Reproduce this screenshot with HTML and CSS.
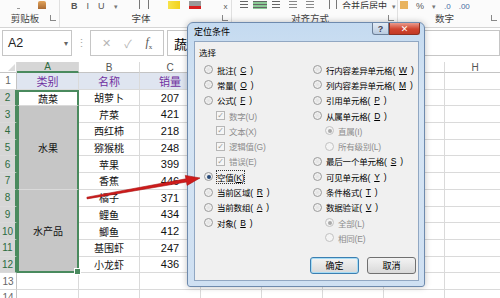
FILE: index.html
```html
<!DOCTYPE html>
<html lang="zh-CN">
<head>
  <meta charset="UTF-8">
  <title>定位条件</title>
  <link rel="stylesheet" href="styles.css">
</head>
<body>
  <div class="ribbon">
    <div class="group g-clip">
      <div class="tools">
        <span class="ico dot"></span>
        <span class="ico brush"></span>
      </div>
      <div class="group-label"><span class="label">剪贴板</span><span class="launcher"></span></div>
    </div>
    <div class="group g-font">
      <div class="tools">
        <span class="glyph b">B</span><span class="glyph">I</span><span class="glyph">U</span><span class="glyph dd">▾</span>
        <span class="ico border-ico"></span>
        <span class="ico hl"></span>
        <span class="ico fc"></span>
        <span class="glyph small">x</span>
      </div>
      <div class="group-label"><span class="label">字体</span><span class="launcher"></span></div>
    </div>
    <div class="group g-align">
      <div class="tools">
        <span class="ico lines"></span>
        <span class="ico lines on"></span>
        <span class="ico lines"></span>
        <span class="ico indent"></span>
        <span class="ico indent"></span>
        <span class="ico merge"></span>
        <span class="merge-text">合并后居中</span>
        <span class="glyph dd">▾</span>
      </div>
      <div class="group-label"><span class="label">对齐方式</span><span class="launcher"></span></div>
    </div>
    <div class="group g-num">
      <div class="tools">
        <span class="ico money"></span>
        <span class="glyph">%</span><span class="glyph dd">▾</span>
        <span class="glyph dec">.0</span><span class="glyph dec">.00</span>
      </div>
      <div class="group-label"><span class="label">数字</span><span class="launcher"></span></div>
    </div>
  </div>

  <div class="formula-bar">
    <div class="name-box">A2<span class="nb-arrow">▾</span></div>
    <div class="grip">⋮</div>
    <div class="fx-box"><span class="fx-btn">✕</span><span class="fx-btn">✓</span><span class="fx-btn fx"><i>f</i><sub>x</sub></span></div>
    <div class="formula-input">蔬菜</div>
  </div>

  <div class="sheet">
    <div class="ch corner"><span class="tri"></span></div><div class="ch sel">A</div><div class="ch">B</div><div class="ch">C</div><div class="ch">D</div><div class="ch">E</div><div class="ch">F</div><div class="ch">G</div><div class="ch">H</div>

    <div class="rh">1</div><div class="c head">类别</div><div class="c head">名称</div><div class="c head">销量</div><div class="c"></div><div class="c"></div><div class="c"></div><div class="c"></div><div class="c"></div>
    <div class="rh sel">2</div><div class="c a2">蔬菜</div><div class="c">胡萝卜</div><div class="c num">207</div><div class="c"></div><div class="c"></div><div class="c"></div><div class="c"></div><div class="c"></div>
    <div class="rh sel">3</div><div class="c merged">水果</div><div class="c">芹菜</div><div class="c num">421</div><div class="c"></div><div class="c"></div><div class="c"></div><div class="c"></div><div class="c"></div>
    <div class="rh sel">4</div><div class="c">西红柿</div><div class="c num">218</div><div class="c"></div><div class="c"></div><div class="c"></div><div class="c"></div><div class="c"></div>
    <div class="rh sel">5</div><div class="c">猕猴桃</div><div class="c num">248</div><div class="c"></div><div class="c"></div><div class="c"></div><div class="c"></div><div class="c"></div>
    <div class="rh sel">6</div><div class="c">苹果</div><div class="c num">399</div><div class="c"></div><div class="c"></div><div class="c"></div><div class="c"></div><div class="c"></div>
    <div class="rh sel">7</div><div class="c">香蕉</div><div class="c num">446</div><div class="c"></div><div class="c"></div><div class="c"></div><div class="c"></div><div class="c"></div>
    <div class="rh sel">8</div><div class="c merged last">水产品</div><div class="c">橘子</div><div class="c num">371</div><div class="c"></div><div class="c"></div><div class="c"></div><div class="c"></div><div class="c"></div>
    <div class="rh sel">9</div><div class="c">鲤鱼</div><div class="c num">434</div><div class="c"></div><div class="c"></div><div class="c"></div><div class="c"></div><div class="c"></div>
    <div class="rh sel">10</div><div class="c">鲫鱼</div><div class="c num">412</div><div class="c"></div><div class="c"></div><div class="c"></div><div class="c"></div><div class="c"></div>
    <div class="rh sel">11</div><div class="c">基围虾</div><div class="c num">247</div><div class="c"></div><div class="c"></div><div class="c"></div><div class="c"></div><div class="c"></div>
    <div class="rh sel">12</div><div class="c">小龙虾</div><div class="c num">436</div><div class="c"></div><div class="c"></div><div class="c"></div><div class="c"></div><div class="c"></div>
    <div class="rh">13</div><div class="c"></div><div class="c"></div><div class="c"></div><div class="c"></div><div class="c"></div><div class="c"></div><div class="c"></div><div class="c"></div>
    <div class="rh">14</div><div class="c"></div><div class="c"></div><div class="c"></div><div class="c"></div><div class="c"></div><div class="c"></div><div class="c"></div><div class="c"></div>
  </div>

  <!-- 定位条件 dialog window -->
  <div class="dialog">
    <div class="title-bar">
      <span class="title">定位条件</span>
      <span class="help-btn">?</span>
      <span class="close-btn">✕</span>
    </div>
    <div class="client">
      <div class="caption">选择</div>
      <div class="options">
        <div class="col">
          <div class="opt"><span class="radio"></span>批注(<u>C</u>)</div>
          <div class="opt"><span class="radio"></span>常量(<u>O</u>)</div>
          <div class="opt"><span class="radio"></span>公式(<u>F</u>)</div>
          <div class="opt sub off"><span class="check">✓</span>数字(U)</div>
          <div class="opt sub off"><span class="check">✓</span>文本(X)</div>
          <div class="opt sub off"><span class="check">✓</span>逻辑值(G)</div>
          <div class="opt sub off"><span class="check">✓</span>错误(E)</div>
          <div class="opt"><span class="radio on"></span><span class="focus">空值(<u>K</u>)</span></div>
          <div class="opt"><span class="radio"></span>当前区域(<u>R</u>)</div>
          <div class="opt"><span class="radio"></span>当前数组(<u>A</u>)</div>
          <div class="opt"><span class="radio"></span>对象(<u>B</u>)</div>
        </div>
        <div class="col">
          <div class="opt"><span class="radio"></span>行内容差异单元格(<u>W</u>)</div>
          <div class="opt"><span class="radio"></span>列内容差异单元格(<u>M</u>)</div>
          <div class="opt"><span class="radio"></span>引用单元格(<u>P</u>)</div>
          <div class="opt"><span class="radio"></span>从属单元格(<u>D</u>)</div>
          <div class="opt sub off"><span class="radio on"></span>直属(I)</div>
          <div class="opt sub off"><span class="radio"></span>所有级别(L)</div>
          <div class="opt"><span class="radio"></span>最后一个单元格(<u>S</u>)</div>
          <div class="opt"><span class="radio"></span>可见单元格(<u>Y</u>)</div>
          <div class="opt"><span class="radio"></span>条件格式(<u>T</u>)</div>
          <div class="opt"><span class="radio"></span>数据验证(<u>V</u>)</div>
          <div class="opt sub off"><span class="radio on"></span>全部(L)</div>
          <div class="opt sub off"><span class="radio"></span>相同(E)</div>
        </div>
      </div>
      <div class="buttons">
        <button class="btn default">确定</button>
        <button class="btn">取消</button>
      </div>
    </div>
  </div>

  <svg class="arrow" width="500" height="298" viewBox="0 0 500 298">
    <polygon points="86.9,197.2 185.9,178.8 185.3,175.4 200,178 187.1,185.4 186.5,182 87.1,198.9" fill="#cf1b1b" stroke="#a81212" stroke-width="0.6"/>
  </svg>
</body>
</html>
```

FILE: styles.css
```css
body {
  margin: 0;
  width: 500px;
  height: 298px;
  overflow: hidden;
  position: relative;
  background: #fff;
  font-family: "Liberation Sans", "Noto Sans CJK SC", sans-serif;
  color: #000;
}

/* ribbon */
.ribbon {
  display: flex;
  height: 27px;
  border-bottom: 1px solid #d5d5d5;
  background: #fbfbfb;
}
.group {
  display: flex;
  flex-direction: column;
  box-sizing: border-box;
  border-right: 1px solid #e0e0e0;
}
.g-clip { width: 60px; }
.g-font { width: 172px; }
.g-align { width: 166px; }
.g-num { flex: 1; border-right: none; }
.tools {
  height: 9px;
  overflow: hidden;
  display: flex;
  align-items: flex-end;
  gap: 6px;
}
.tools > * { margin-bottom: -2px; }
.group-label {
  flex: 1;
  display: flex;
  align-items: center;
  font-size: 9.5px;
  color: #444;
  padding: 0 3px 0 0;
}
.group-label .label {
  flex: 1;
  text-align: center;
}
.launcher {
  width: 5px;
  height: 5px;
  border-left: 1px solid #888;
  border-bottom: 1px solid #888;
}
.ico { display: inline-block; width: 8px; height: 10px; }
.glyph { font-size: 9px; color: #555; line-height: 9px; }
.glyph.b { font-weight: bold; }
.glyph.dd { font-size: 7px; color: #777; }
.glyph.small { font-size: 8px; margin-left: 14px; }
.glyph.dec { font-size: 8px; color: #4a6fa5; }
.g-clip .tools { padding-left: 17px; gap: 18px; }
.dot { width: 3px; height: 3px; background: #999; }
.brush { background: linear-gradient(#e2a35a, #9a5b2a); border-radius: 2px; }
.g-font .tools { padding-left: 11px; gap: 9px; }
.border-ico { border: 1px solid #777; margin-left: 12px; }
.hl { width: 12px; background: linear-gradient(90deg, #f7e34a, #f2d21a); margin-left: 10px; }
.fc { width: 12px; background: linear-gradient(#999 0 55%, #d81e1e 55%); }
.g-align .tools { padding-left: 8px; gap: 5px; }
.lines { background: repeating-linear-gradient(#666 0 1px, transparent 1px 3px); }
.lines.on { width: 14px; background-color: #8ccb97; }
.indent { background: repeating-linear-gradient(#888 0 1px, transparent 1px 3px); margin-left: 4px; }
.merge { border: 1px solid #777; width: 6px; margin-left: 10px; }
.merge-text { font-size: 9px; line-height: 9px; color: #333; }
.g-num .tools { padding-left: 2px; gap: 8px; }
.money { background: #e8b35f; }

/* formula bar */
.formula-bar {
  display: flex;
  align-items: flex-start;
  height: 34px;
  box-sizing: border-box;
  padding: 2px 0 0 2px;
}
.name-box, .fx-box, .formula-input {
  height: 26px;
  box-sizing: border-box;
  border: 1px solid #c6c6c6;
  background: #fff;
  display: flex;
  align-items: center;
}
.name-box {
  width: 70px;
  padding-left: 5px;
  font-size: 12.5px;
  color: #222;
}
.nb-arrow {
  margin-left: auto;
  margin-right: 3px;
  font-size: 8px;
  color: #666;
}
.grip {
  width: 18px;
  text-align: center;
  color: #aaa;
  font-size: 11px;
  line-height: 26px;
}
.fx-box {
  width: 74px;
  justify-content: space-around;
  padding: 0 4px;
}
.fx-btn { font-size: 11px; color: #b5b5b5; }
.fx-btn.fx { color: #555; font-family: "Liberation Serif", serif; font-size: 12px; }
.fx sub { font-size: 7px; }
.formula-input {
  flex: 1;
  margin-left: 3px;
  padding-left: 6px;
  font-size: 13px;
  font-family: "Noto Sans CJK SC", sans-serif;
}

/* worksheet */
.sheet {
  display: grid;
  grid-template-columns: 17px 62px repeat(7, 61px);
  grid-template-rows: 11px repeat(14, 16.7px);
  font-family: "Noto Sans CJK SC", sans-serif;
  font-size: 10px;
  color: #111;
}
.sheet > div {
  box-sizing: border-box;
  border-right: 1px solid #dadada;
  border-bottom: 1px solid #dadada;
  display: flex;
  align-items: center;
  justify-content: center;
  white-space: nowrap;
  overflow: hidden;
}
.ch {
  font-family: "Liberation Sans", sans-serif;
  font-size: 10px;
  color: #555;
  border-bottom-color: #c4c4c4 !important;
}
.ch.sel {
  background: #d6d6d6;
  color: #2c6b3f;
  border-bottom: 2px solid #4a8a5e !important;
}
.corner { position: relative; }
.tri {
  position: absolute;
  right: 1px;
  bottom: 1px;
  border-left: 7px solid transparent;
  border-bottom: 7px solid #dcdcdc;
}
.rh {
  font-family: "Liberation Sans", sans-serif;
  font-size: 10px;
  color: #666;
  border-right-color: #c4c4c4 !important;
}
.rh.sel {
  background: #d6d6d6;
  color: #2c6b3f;
  border-right: 2px solid #4a8a5e !important;
}
.c.num {
  font-family: "Liberation Sans", sans-serif;
  font-size: 11px;
}
.c.head {
  background: #dfe5f0;
  color: #7030a0;
  font-size: 11px;
}
.c.a2 {
  border: 2px solid #4a8a5e;
  border-bottom: 1px solid #dadada;
}
.c.merged {
  grid-row: span 5;
  background: #c6c6c6;
  border-left: 2px solid #4a8a5e;
  border-right: 2px solid #4a8a5e;
}
.c.merged.last {
  border-bottom: 2px solid #4a8a5e;
  position: relative;
  overflow: visible;
}
.merged.last::after {
  content: "";
  position: absolute;
  right: -4px;
  bottom: -4px;
  width: 5px;
  height: 5px;
  background: #4a8a5e;
  border: 1px solid #fff;
}

/* dialog window */
.dialog {
  position: absolute;
  left: 187px;
  top: 22px;
  width: 238px;
  height: 265px;
  box-sizing: border-box;
  border: 1px solid #6e8aad;
  border-radius: 6px 6px 3px 3px;
  background: linear-gradient(#c4daf0, #d6e5f4 30%, #cfe0f2);
  padding: 0 5px 5px 6px;
  display: flex;
  flex-direction: column;
  box-shadow: 0 0 6px rgba(0, 0, 0, 0.25);
  font-family: "Liberation Sans", "Noto Sans CJK SC", sans-serif;
  font-size: 8.5px;
}
.title-bar {
  height: 18px;
  display: flex;
  align-items: flex-start;
}
.title {
  flex: 1;
  font-size: 9px;
  line-height: 18px;
}
.help-btn, .close-btn {
  height: 12px;
  display: flex;
  align-items: center;
  justify-content: center;
  box-sizing: border-box;
  border: 1px solid #6b7f98;
  border-top: none;
  font-size: 9px;
}
.help-btn {
  width: 17px;
  background: linear-gradient(#e4ecf5, #b9cbe0);
  color: #445;
  font-weight: bold;
  border-radius: 0 0 0 3px;
}
.close-btn {
  width: 31px;
  margin-right: -1px;
  background: linear-gradient(#eb9b8c, #d0452f 55%, #c33a25);
  color: #fff;
  border-color: #8d3122;
  border-radius: 0 0 3px 0;
  font-family: "DejaVu Sans", sans-serif;
  font-weight: bold;
}
.client {
  flex: 1;
  background: #f0f0f0;
  border: 1px solid #91a7c2;
  display: flex;
  flex-direction: column;
  padding: 0 2px 6px 4px;
}
.caption {
  padding-top: 5px;
  height: 12px;
  line-height: 12px;
  margin-bottom: 3px;
}
.options {
  display: grid;
  grid-template-columns: 109px 1fr;
  padding-left: 5px;
}
.opt {
  height: 15.3px;
  display: flex;
  align-items: center;
  gap: 4px;
  white-space: nowrap;
  letter-spacing: -0.2px;
}
.opt u { text-decoration-thickness: 1px; text-underline-offset: 1px; }
.opt.sub { padding-left: 12px; }
.opt.off { color: #8d8d8d; }
.radio {
  flex: none;
  width: 9px;
  height: 9px;
  box-sizing: border-box;
  border-radius: 50%;
  border: 1px solid #9a9a9a;
  background: radial-gradient(circle, #e2e2e2, #f8f8f8);
  display: flex;
  align-items: center;
  justify-content: center;
}
.radio.on::after {
  content: "";
  width: 4px;
  height: 4px;
  border-radius: 50%;
  background: #284a78;
}
.off .radio { border-color: #c2c2c2; background: #f4f4f4; }
.off .radio.on::after { background: #aaa; }
.check {
  flex: none;
  width: 9px;
  height: 9px;
  box-sizing: border-box;
  border: 1px solid #b6b6b6;
  background: #f6f6f6;
  font-size: 8px;
  line-height: 8px;
  text-align: center;
  color: #9a9a9a;
  font-family: "DejaVu Sans", sans-serif;
}
.focus { outline: 1px dotted #333; outline-offset: 0; }
.buttons {
  margin-top: auto;
  display: flex;
  justify-content: flex-end;
  gap: 8px;
}
.btn {
  width: 49px;
  height: 17px;
  padding: 0;
  border: 1px solid #707070;
  border-radius: 3px;
  background: linear-gradient(#f3f3f3, #e6e6e6 50%, #d8d8d8);
  font-family: "Noto Sans CJK SC", sans-serif;
  font-size: 9px;
  color: #000;
}
.btn.default {
  border-color: #3c7fb1;
  box-shadow: inset 0 0 0 1px #a6dcf5;
}

.arrow {
  position: absolute;
  left: 0;
  top: 0;
  pointer-events: none;
}
```
